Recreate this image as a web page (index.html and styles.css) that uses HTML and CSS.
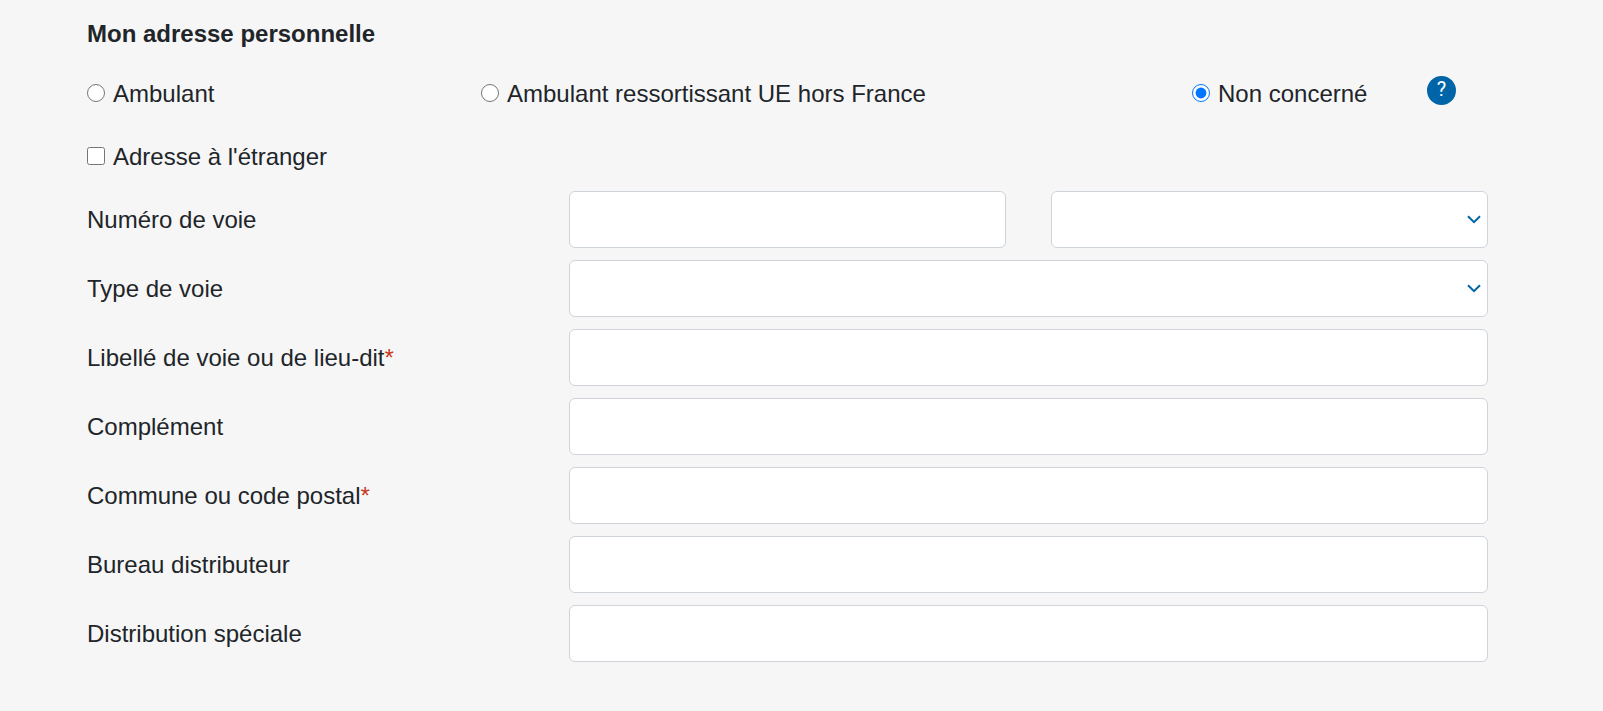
FILE: index.html
```html
<!DOCTYPE html>
<html lang="fr">
<head>
<meta charset="utf-8">
<meta name="viewport" content="width=device-width, initial-scale=1">
<title>Mon adresse personnelle</title>
<link rel="stylesheet" href="styles.css">
</head>
<body>
<form class="address-form">
  <h2 class="title">Mon adresse personnelle</h2>
  <div class="situation" role="radiogroup" aria-label="Situation">
    <label class="choice"><input type="radio" name="situation"><span>Ambulant</span></label>
    <label class="choice"><input type="radio" name="situation"><span>Ambulant ressortissant UE hors France</span></label>
    <label class="choice"><input type="radio" name="situation" checked><span>Non concerné</span></label>
    <button type="button" class="help">?</button>
  </div>
  <label class="choice abroad"><input type="checkbox" name="etranger"><span>Adresse à l'étranger</span></label>
  <div class="rows">
    <div class="row">
      <label for="numero">Numéro de voie</label>
      <input class="field" type="text" id="numero">
      <div class="select-wrap">
        <select class="field" aria-label="Indice de répétition"><option></option></select>
        <svg class="chevron" viewBox="0 0 14 9" aria-hidden="true"><path d="M1 1.2 7 7.2 13 1.2"/></svg>
      </div>
    </div>
    <div class="row">
      <label for="type">Type de voie</label>
      <div class="select-wrap wide">
        <select class="field" id="type"><option></option></select>
        <svg class="chevron" viewBox="0 0 14 9" aria-hidden="true"><path d="M1 1.2 7 7.2 13 1.2"/></svg>
      </div>
    </div>
    <div class="row">
      <label for="libelle">Libellé de voie ou de lieu-dit<span class="required">*</span></label>
      <input class="field wide" type="text" id="libelle" required>
    </div>
    <div class="row">
      <label for="complement">Complément</label>
      <input class="field wide" type="text" id="complement">
    </div>
    <div class="row">
      <label for="commune">Commune ou code postal<span class="required">*</span></label>
      <input class="field wide" type="text" id="commune" required>
    </div>
    <div class="row">
      <label for="bureau">Bureau distributeur</label>
      <input class="field wide" type="text" id="bureau">
    </div>
    <div class="row">
      <label for="distribution">Distribution spéciale</label>
      <input class="field wide" type="text" id="distribution">
    </div>
  </div>
</form>
</body>
</html>
```
FILE: styles.css
```css
* {
  box-sizing: border-box;
}

body {
  margin: 0;
  background: #f6f6f6;
  color: #212529;
  font: 24px/36px "Liberation Sans", Arial, sans-serif;
}

.address-form {
  padding: 16px 115px 40px 87px;
}

.title {
  margin: 0 0 24px;
  font-size: 24px;
  line-height: 36px;
}

.situation {
  display: grid;
  grid-template-columns: 394fr 711fr 235fr 61fr;
  align-items: start;
  margin-bottom: 27px;
}

.choice {
  display: flex;
  align-items: center;
  gap: 8px;
}

.choice input {
  width: 18px;
  height: 18px;
  margin: 0 0 2px;
}

.abroad {
  width: fit-content;
  margin-bottom: 16px;
}

.help {
  width: 29px;
  height: 29px;
  padding: 0 0 2px;
  border: 0;
  border-radius: 50%;
  background: #0065a8;
  color: #fff;
  font: 400 20px/27px Roboto, sans-serif;
}

.rows {
  display: grid;
  gap: 12px;
}

.row {
  display: grid;
  grid-template-columns: repeat(3, minmax(0, 1fr));
  column-gap: 45px;
  align-items: center;
}

.wide {
  grid-column: span 2;
}

.field {
  display: block;
  width: 100%;
  height: 57px;
  padding: 9px 18px;
  border: 1px solid #ced4da;
  border-radius: 6px;
  background: #fff;
  color: inherit;
  font: inherit;
  appearance: none;
}

.select-wrap {
  position: relative;
}

.chevron {
  position: absolute;
  top: 24px;
  right: 7px;
  width: 14px;
  height: 9px;
  fill: none;
  stroke: #0065a8;
  stroke-width: 2;
  pointer-events: none;
}

.required {
  color: #c9391e;
}
```
